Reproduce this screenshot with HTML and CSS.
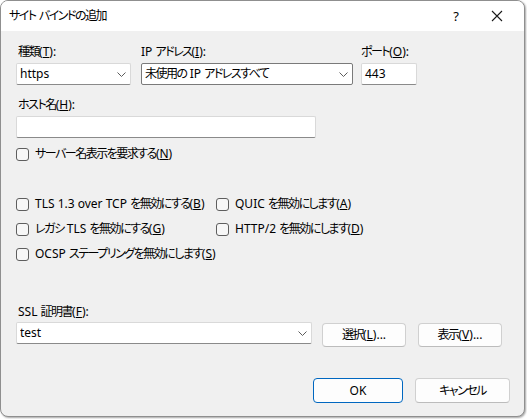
FILE: index.html
```html
<!DOCTYPE html>
<html lang="ja">
<head>
<meta charset="utf-8">
<link rel="stylesheet" href="styles.css">
</head>
<body>
<div class="window">
  <div class="titlebar">
    <span class="title"><span class="j">サイト</span> <span class="j">バインドの追加</span></span>
    <span class="help">?</span>
    <span class="close"><svg width="12" height="12" viewBox="0 0 12 12"><path d="M1 1 L11 11 M11 1 L1 11" stroke="#1a1a1a" stroke-width="1.1" fill="none"/></svg></span>
  </div>
  <div class="content">
    <div class="top-row">
      <div class="field">
        <div class="label lab-type"><span class="j">種類</span>(<u>T</u>):</div>
        <div class="combo w-type"><span class="val">https</span><svg class="chev" width="9" height="5" viewBox="0 0 9 5"><path d="M0.5 0.5 L4.5 4.5 L8.5 0.5" stroke="#5c5c5c" fill="none" stroke-width="1"/></svg></div>
      </div>
      <div class="field">
        <div class="label">IP <span class="j">アドレス</span>(<u>I</u>):</div>
        <div class="combo combo-dark w-ip"><span class="val"><span class="j">未使用の</span> IP <span class="j">アドレスすべて</span></span><svg class="chev" width="9" height="5" viewBox="0 0 9 5"><path d="M0.5 0.5 L4.5 4.5 L8.5 0.5" stroke="#5c5c5c" fill="none" stroke-width="1"/></svg></div>
      </div>
      <div class="field">
        <div class="label"><span class="j">ポート</span>(<u>O</u>):</div>
        <div class="textbox w-port">443</div>
      </div>
    </div>
    <div class="field host">
      <div class="label lab-type"><span class="j">ホスト名</span>(<u>H</u>):</div>
      <div class="textbox w-host"></div>
    </div>
    <div class="check sni"><span class="box"></span><span><span class="j">サーバー名表示を要求する</span>(<u>N</u>)</span></div>
    <div class="check-grid">
      <div class="check"><span class="box"></span><span>TLS 1.3 over TCP <span class="j">を無効にする</span>(<u>B</u>)</span></div>
      <div class="check"><span class="box"></span><span>QUIC <span class="j">を無効にします</span>(<u>A</u>)</span></div>
      <div class="check"><span class="box"></span><span><span class="j">レガシ</span> TLS <span class="j">を無効にする</span>(<u>G</u>)</span></div>
      <div class="check"><span class="box"></span><span>HTTP/2 <span class="j">を無効にします</span>(<u>D</u>)</span></div>
      <div class="check"><span class="box"></span><span>OCSP <span class="j">ステープリングを無効にします</span>(<u>S</u>)</span></div>
    </div>
    <div class="label lab-type ssl-label">SSL <span class="j">証明書</span>(<u>F</u>):</div>
    <div class="ssl-row">
      <div class="combo w-ssl"><span class="val">test</span><svg class="chev" width="9" height="5" viewBox="0 0 9 5"><path d="M0.5 0.5 L4.5 4.5 L8.5 0.5" stroke="#5c5c5c" fill="none" stroke-width="1"/></svg></div>
      <button class="btn btn-select"><span class="j">選択</span>(<u>L</u>)...</button>
      <button class="btn btn-view"><span class="j">表示</span>(<u>V</u>)...</button>
    </div>
    <div class="actions">
      <button class="btn btn-ok">OK</button>
      <button class="btn btn-cancel"><span class="j">キャンセル</span></button>
    </div>
  </div>
</div>
</body>
</html>
```
FILE: styles.css
```css
* { box-sizing: border-box; }
html, body { margin: 0; padding: 0; }
body {
  width: 527px;
  height: 419px;
  background: #ffffff;
  font-family: "Noto Sans", "Noto Sans CJK JP", sans-serif;
  font-size: 12px;
  font-feature-settings: "palt";
  color: #000;
  overflow: hidden;
}
.j { letter-spacing: -1.5px; }
.window {
  width: 525px;
  height: 417px;
  border: 1px solid #8f8f8f;
  border-radius: 8px;
  background: #f0f0f0;
  overflow: hidden;
  box-shadow: 1px 1px 2px rgba(0,0,0,0.35);
}
.titlebar {
  height: 30px;
  background: #ffffff;
  display: flex;
  align-items: center;
  padding-left: 8px;
}
.title { flex: 1; line-height: 16px; }
.help { width: 20px; text-align: center; margin-right: 25px; font-size: 13px; }
.close { width: 12px; height: 12px; margin-right: 21px; display: flex; }
.content {
  padding: 13px 14px 0 15px;
}
.label { line-height: 16px; height: 16px; white-space: nowrap; }
.lab-type { padding-left: 2px; }
.top-row { display: flex; }
.top-row .field:nth-child(1) { margin-right: 10px; }
.top-row .field:nth-child(2) { margin-right: 8px; }
.field .label { margin-bottom: 3px; }
.combo, .textbox {
  height: 22px;
  background: #fff;
  border: 1px solid #d9d9d9;
  border-bottom-color: #8a8a8a;
  border-radius: 2px;
  display: flex;
  align-items: center;
  padding-left: 3px;
  line-height: 16px;
  white-space: nowrap;
}
.val { flex: 1; overflow: hidden; }
.chev { margin-right: 4px; flex: none; }
.combo-dark { border-color: #7a7a7a; }
.w-type { width: 115px; }
.w-ip { width: 212px; }
.w-port { width: 56px; }
.w-host { width: 300px; }
.w-ssl { width: 296px; }
.host { margin-top: 12px; }
.check {
  display: flex;
  align-items: center;
  height: 16px;
  line-height: 16px;
  white-space: nowrap;
}
.box {
  width: 13px;
  height: 13px;
  border: 1px solid #5e5e5e;
  border-radius: 3px;
  background: #f7f7f7;
  margin-right: 6px;
  flex: none;
}
.sni { margin-top: 8px; }
.check-grid {
  margin-top: 34px;
  display: grid;
  grid-template-columns: 200px auto;
  row-gap: 9px;
}
.ssl-label { margin-top: 42px; margin-bottom: 2px; }
.ssl-row { display: flex; align-items: flex-start; }
.btn {
  font: inherit;
  font-feature-settings: "palt";
  color: #000;
  background: #fdfdfd;
  border: 1px solid #d0d0d0;
  border-bottom-color: #bcbcbc;
  border-radius: 4px;
  padding: 0;
  line-height: 16px;
}
.btn-select { width: 84px; height: 24px; margin-left: 10px; margin-top: 1px; }
.btn-view { width: 84px; height: 24px; margin-left: 12px; margin-top: 1px; }
.actions {
  display: flex;
  justify-content: flex-end;
  gap: 12px;
  margin-top: 31px;
}
.btn-ok { width: 90px; height: 25px; border: 1px solid #0067c0; box-shadow: inset 0 0 0 1px #fdfdfd; }
.btn-cancel { width: 95px; height: 25px; }
u { text-underline-offset: 1px; }
```
